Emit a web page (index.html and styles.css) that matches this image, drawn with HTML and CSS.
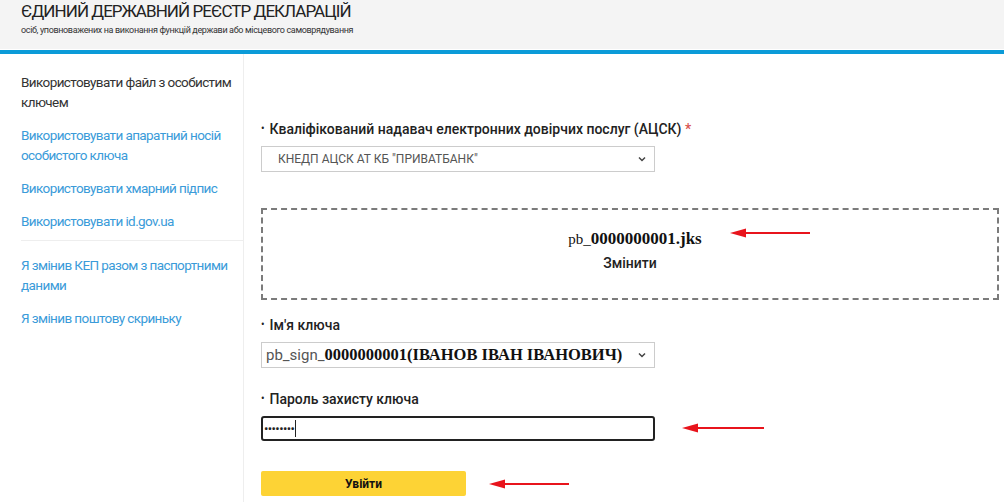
FILE: index.html
```html
<!DOCTYPE html>
<html lang="uk">
<head>
<meta charset="utf-8">
<title>Єдиний державний реєстр декларацій</title>
<link rel="stylesheet" href="styles.css">
</head>
<body>
<header class="header">
  <div class="title">ЄДИНИЙ ДЕРЖАВНИЙ РЕЄСТР ДЕКЛАРАЦІЙ</div>
  <div class="subtitle">осіб, уповноважених на виконання функцій держави або місцевого самоврядування</div>
</header>
<div class="bar"></div>
<div class="layout">
  <nav class="sidebar">
    <div class="nav-item active">Використовувати файл з особистим ключем</div>
    <a class="nav-item">Використовувати апаратний носій особистого ключа</a>
    <a class="nav-item">Використовувати хмарний підпис</a>
    <a class="nav-item">Використовувати id.gov.ua</a>
    <div class="nav-sep"></div>
    <a class="nav-item">Я змінив КЕП разом з паспортними даними</a>
    <a class="nav-item">Я змінив поштову скриньку</a>
  </nav>
  <main class="main">
    <div class="label label-first">Кваліфікований надавач електронних довірчих послуг (АЦСК) <span class="req">*</span></div>
    <div class="select select-ca">
      <span class="select-text">КНЕДП АЦСК АТ КБ "ПРИВАТБАНК"</span>
      <svg class="chev" width="8" height="6" viewBox="0 0 8 6"><path d="M1 1.5 L4 4.5 L7 1.5" fill="none" stroke="#444" stroke-width="1.5"/></svg>
    </div>
    <div class="dropzone">
      <div class="file-name"><span class="fn-pre">pb_</span>0000000001.jks</div>
      <div class="change">Змінити</div>
      <svg class="arrow arrow-1" width="82" height="12" viewBox="0 0 82 12"><path d="M14 6 H80" stroke="#e8141c" stroke-width="2.2"/><path d="M0 6 L16 1.5 L16 10.5 Z" fill="#e8141c"/></svg>
    </div>
    <div class="label label-key">Ім'я ключа</div>
    <div class="select select-key">
      <span class="key-text"><span class="key-pre">pb_sign_</span><span class="key-main">0000000001(ІВАНОВ ІВАН ІВАНОВИЧ)</span></span>
      <svg class="chev" width="8" height="6" viewBox="0 0 8 6"><path d="M1 1.5 L4 4.5 L7 1.5" fill="none" stroke="#444" stroke-width="1.5"/></svg>
    </div>
    <div class="label label-pass">Пароль захисту ключа</div>
    <div class="pass-row">
      <div class="password"><span class="dots">••••••••</span><span class="caret"></span></div>
      <svg class="arrow arrow-2" width="84" height="12" viewBox="0 0 84 12"><path d="M14 6 H82" stroke="#e8141c" stroke-width="2.2"/><path d="M0 6 L16 1.5 L16 10.5 Z" fill="#e8141c"/></svg>
    </div>
    <div class="btn-row">
      <button class="btn">Увійти</button>
      <svg class="arrow arrow-3" width="82" height="12" viewBox="0 0 82 12"><path d="M14 6 H80" stroke="#e8141c" stroke-width="2.2"/><path d="M0 6 L16 1.5 L16 10.5 Z" fill="#e8141c"/></svg>
    </div>
  </main>
</div>
</body>
</html>
```

FILE: styles.css
```css
* { box-sizing: border-box; }
html, body { margin: 0; padding: 0; background: #fff; }
body {
  font-family: Roboto, "Liberation Sans", sans-serif;
  color: #222;
  width: 1004px;
  height: 502px;
  overflow: hidden;
}
.header {
  height: 50px;
  background: #f4f4f4;
  padding: 1px 0 0 21px;
  border-bottom: 1px solid #fff;
}
.title {
  font-size: 17px;
  line-height: 20px;
  color: #222;
  letter-spacing: -0.95px;
}
.subtitle {
  font-size: 9px;
  line-height: 12px;
  color: #333;
  margin-top: 3px;
  letter-spacing: -0.35px;
}
.bar {
  height: 4px;
  background: #0b9bd8;
}
.layout {
  display: flex;
}
.sidebar {
  width: 244px;
  flex: none;
  border-right: 1px solid #eeeeee;
  padding: 18px 0 0 21px;
  height: 448px;
  display: flex;
  flex-direction: column;
  gap: 13px;
}
.nav-item {
  display: block;
  font-size: 13.5px;
  letter-spacing: -0.6px;
  line-height: 20px;
  color: #3a9bd9;
  padding-right: 10px;
  text-decoration: none;
}
.nav-item.active { color: #333; }
.nav-sep {
  height: 1px;
  background: #eeeeee;
  margin: -4px 0 1px 0;
}
.main {
  flex: 1;
  padding: 65px 5px 0 17px;
}
.label {
  font-size: 14px;
  line-height: 20px;
  font-weight: 500;
  color: #222;
}
.label::before {
  content: "•";
  font-size: 10px;
  margin-right: 5px;
  vertical-align: 2px;
}
.req { color: #d9534f; }
.select {
  width: 394px;
  height: 26px;
  border: 1px solid #cccccc;
  margin-top: 7px;
  display: flex;
  align-items: center;
  justify-content: space-between;
  padding: 0 8px 0 16px;
  background: #fff;
}
.select-text {
  font-size: 12px;
  color: #555;
}
.chev { flex: none; }
.dropzone {
  position: relative;
  margin-top: 36px;
  height: 92px;
  border: 2px dashed #7b7b7b;
  display: flex;
  flex-direction: column;
  align-items: center;
  padding-top: 19px;
}
.file-name {
  font-family: "Liberation Serif", "DejaVu Serif", serif;
  font-weight: bold;
  font-size: 17px;
  line-height: 20px;
  color: #111;
  margin-left: 10px;
}
.fn-pre { font-weight: normal; font-size: 15px; }
.change {
  font-size: 14px;
  line-height: 20px;
  font-weight: 500;
  margin-top: 4px;
  color: #222;
}
.arrow { position: absolute; }
.arrow-1 { left: 467px; top: 17px; }
.label-key { margin-top: 15px; }
.select-key { padding-left: 4px; }
.key-text { white-space: nowrap; }
.key-pre { color: #555; font-size: 15px; }
.key-main {
  font-family: "Liberation Serif", "DejaVu Serif", serif;
  font-weight: bold;
  color: #111;
  font-size: 16.5px;
}
.label-pass { margin-top: 21px; }
.pass-row, .btn-row {
  position: relative;
}
.pass-row { margin-top: 7px; }
.password {
  width: 394px;
  height: 25px;
  border: 2px solid #222;
  border-radius: 3px;
  display: flex;
  align-items: center;
  padding-left: 1px;
}
.dots {
  font-size: 13px;
  letter-spacing: -0.6px;
  color: #222;
}
.caret {
  width: 1px;
  height: 17px;
  background: #222;
  margin-left: 1px;
}
.arrow-2 { left: 421px; top: 6px; }
.btn-row { margin-top: 30px; }
.btn {
  width: 205px;
  height: 25px;
  border: none;
  border-radius: 2px;
  background: #fdd335;
  font-family: Roboto, "Liberation Sans", sans-serif;
  font-weight: bold;
  font-size: 12px;
  color: #111;
  padding: 0;
}
.arrow-3 { left: 228px; top: 7px; }
```
